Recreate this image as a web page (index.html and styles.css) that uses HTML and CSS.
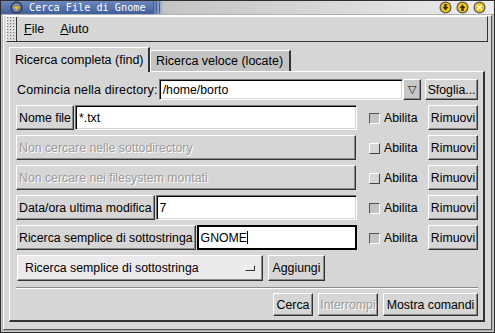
FILE: index.html
```html
<!DOCTYPE html>
<html>
<head>
<meta charset="utf-8">
<link rel="stylesheet" href="styles.css">
</head>
<body>
<div class="win">
  <div class="titlebar">
    <div class="title-blue">
      <span class="app-icon"><svg width="13" height="13" viewBox="0 0 13 13"><circle cx="6.5" cy="6.5" r="6" fill="#2d3550"/><circle cx="6.5" cy="6.5" r="4.6" fill="#7a87a8"/><path d="M3.5 5.5 H9.5 L6.5 9 Z" fill="#f0c400"/></svg></span>
      <span class="title-text">Cerca File di Gnome</span>
    </div>
    <div class="waves"><span></span><span></span><span></span></div>
    <div class="title-rest">
      <span class="tb-btn"><svg width="13" height="13" viewBox="0 0 13 13"><circle cx="6.5" cy="6.5" r="6" fill="#5b5a4a"/><circle cx="6.5" cy="6.5" r="4.8" fill="#e8c020"/><path d="M5.3 3 H7.7 V6 H9.3 L6.5 9.6 L3.7 6 H5.3 Z" fill="#3a3000"/></svg></span>
      <span class="tb-btn"><svg width="13" height="13" viewBox="0 0 13 13"><circle cx="6.5" cy="6.5" r="6" fill="#5b5a4a"/><circle cx="6.5" cy="6.5" r="4.8" fill="#e8c020"/><path d="M5.3 10 H7.7 V7 H9.3 L6.5 3.4 L3.7 7 H5.3 Z" fill="#3a3000"/></svg></span>
      <span class="tb-btn"><svg width="13" height="13" viewBox="0 0 13 13"><circle cx="6.5" cy="6.5" r="6" fill="#5b5a4a"/><circle cx="6.5" cy="6.5" r="4.8" fill="#e8c020"/><path d="M4.3 4.3 L8.7 8.7 M8.7 4.3 L4.3 8.7" stroke="#fff6c0" stroke-width="1.8"/></svg></span>
    </div>
  </div>
  <div class="body">
    <div class="menubar">
      <div class="handle"></div>
      <div class="menus">
        <span class="menu"><u>F</u>ile</span>
        <span class="menu"><u>A</u>iuto</span>
      </div>
    </div>
    <div class="main">
      <div class="tabs">
        <div class="tab active">Ricerca completa (find)</div>
        <div class="tab">Ricerca veloce (locate)</div>
      </div>
      <div class="panel">
        <div class="row row1">
          <span class="plain-label">Comincia nella directory:</span>
          <div class="entry dir">/home/borto</div>
          <div class="btn drop">▽</div>
          <div class="btn sfoglia">Sfoglia...</div>
        </div>
        <div class="row">
          <div class="btn lab">Nome file</div>
          <div class="entry grow">*.txt</div>
          <label class="chk"><span class="box on"></span>Abilita</label>
          <div class="btn rim">Rimuovi</div>
        </div>
        <div class="row">
          <div class="btn lab disabled grow">Non cercare nelle sottodirectory</div>
          <label class="chk"><span class="box"></span>Abilita</label>
          <div class="btn rim">Rimuovi</div>
        </div>
        <div class="row">
          <div class="btn lab disabled grow">Non cercare nei filesystem montati</div>
          <label class="chk"><span class="box"></span>Abilita</label>
          <div class="btn rim">Rimuovi</div>
        </div>
        <div class="row">
          <div class="btn lab">Data/ora ultima modifica</div>
          <div class="entry grow">7</div>
          <label class="chk"><span class="box on"></span>Abilita</label>
          <div class="btn rim">Rimuovi</div>
        </div>
        <div class="row">
          <div class="btn lab">Ricerca semplice di sottostringa</div>
          <div class="entry grow focus">GNOME<span class="caret"></span></div>
          <label class="chk"><span class="box on"></span>Abilita</label>
          <div class="btn rim">Rimuovi</div>
        </div>
        <div class="row addrow">
          <div class="btn optmenu">Ricerca semplice di sottostringa<span class="ind"></span></div>
          <div class="btn aggiungi">Aggiungi</div>
        </div>
        <div class="sep"></div>
        <div class="actions">
          <div class="btn act cerca">Cerca</div>
          <div class="btn act stop disabled">Interrompi</div>
          <div class="btn act mostra">Mostra comandi</div>
        </div>
      </div>
    </div>
  </div>
</div>
</body>
</html>
```
FILE: styles.css
```css
* { box-sizing: border-box; }
html, body { margin: 0; padding: 0; }
body {
  width: 495px; height: 333px; overflow: hidden;
  background: #d6d6d6;
  font-family: "Liberation Sans", Arial, sans-serif;
  font-size: 12.3px;
  color: #000;
}
.win {
  width: 495px; height: 333px;
  border: 1px solid #2e2e2e;
  background: #c8c8c8;
  display: flex; flex-direction: column;
}
.titlebar {
  height: 17px;
  display: flex;
  background: #c8c8c8;
  border-bottom: 1px solid #8a8a8a;
}
.title-blue {
  width: 152px;
  background: linear-gradient(#6c88bd, #3f5f9c);
  display: flex; align-items: center;
  padding-left: 9px;
}
.app-icon { width: 13px; height: 13px; display: flex; }
.title-text {
  font-family: "DejaVu Sans Mono", monospace;
  font-size: 10.2px;
  color: #fff;
  margin-left: 6px;
  white-space: nowrap;
}
.waves {
  width: 10px; display: flex; gap: 1px;
  background: linear-gradient(90deg, #5a78b0, #b8c0cc);
}
.waves span {
  width: 2px; border-left: 1px solid #3c5a94; border-radius: 50%/8px;
}
.title-rest {
  flex: 1;
  background: linear-gradient(90deg, #c4c4c4, #ececec);
  display: flex; justify-content: flex-end; align-items: center;
  gap: 4px; padding-right: 8px;
}
.tb-btn { width: 13px; height: 13px; display: flex; }
.body {
  flex: 1;
  background: #d6d6d6;
  border: 1px solid #fff;
  border-right-color: #555; border-bottom-color: #555;
  margin: 0 2px 2px 2px;
  display: flex; flex-direction: column;
  box-shadow: 0 0 0 1px #b0b0b0;
}
.menubar {
  height: 26px;
  margin: 0 3px 0 2px;
  display: flex;
  border: 1px solid #fff;
  border-right-color: #333; border-bottom-color: #333;
}
.handle {
  width: 10px;
  border-right: 1px solid #333;
  background-image: radial-gradient(circle, #fff 0.6px, transparent 0.9px), radial-gradient(circle, #777 0.6px, transparent 0.9px);
  background-size: 3px 3px, 3px 3px;
  background-position: 1px 1px, 2px 2px;
}
.menus { display: flex; align-items: center; padding-left: 7px; font-size: 12.5px; }
.menu { margin-right: 16px; }
.main {
  flex: 1;
  padding: 5px 6px 7px 5px;
  display: flex; flex-direction: column;
}
.tabs { display: flex; height: 24px; align-items: flex-end; }
.tab {
  height: 21px;
  width: 141px;
  padding: 0 0 0 5px;
  background: #c3c3c3;
  border: 1px solid #fff;
  border-bottom: none;
  border-right: 2px solid #333;
  display: flex; align-items: center;
  font-size: 12.5px;
  white-space: nowrap;
  overflow: hidden;
}
.tab.active {
  height: 25px;
  background: #d6d6d6;
  margin-bottom: -1px;
  position: relative; z-index: 1;
}
.panel {
  flex: 1;
  border: 1px solid #fff;
  border-right: 2px solid #333; border-bottom: 2px solid #333;
  padding: 7px 5px 4px 6px;
  display: flex; flex-direction: column;
}
.row {
  height: 25px;
  display: flex; align-items: center;
  margin-bottom: 5px;
}
.row1 { height: 21px; margin-bottom: 5px; }
.plain-label { width: 143px; padding-left: 1px; white-space: nowrap; font-size: 12.5px; letter-spacing: 0.15px; }
.btn {
  height: 100%;
  display: flex; align-items: center; justify-content: center;
  background: #d6d6d6;
  border: 1px solid #fff;
  border-right-color: #333; border-bottom-color: #333;
  box-shadow: inset -1px -1px 0 #8a8a8a;
  white-space: nowrap;
}
.btn.disabled { color: #9c9c9c; text-shadow: 1px 1px 0 #fff; }
.btn.lab { justify-content: flex-start; padding: 0 2px 0 2px; margin-right: 1px; }
.entry {
  height: 100%;
  background: #fff;
  border: 1px solid #777;
  border-right-color: #fff; border-bottom-color: #fff;
  box-shadow: inset 1px 1px 0 #000, inset -1px -1px 0 #d6d6d6;
  display: flex; align-items: center;
  padding-left: 3px;
  white-space: nowrap;
}
.entry.focus { border-color: #000; box-shadow: inset 1px 1px 0 #000, inset -1px -1px 0 #000; }
.caret { display: inline-block; width: 1px; height: 13px; background: #000; }
.dir { width: 245px; }
.grow { flex: 1; }
.drop { width: 18px; font-size: 11px; background: #c8c8c8; }
.sfoglia { width: 53px; margin-left: 4px; }
.chk {
  width: 71px;
  display: flex; align-items: center;
  padding-left: 12px;
}
.box {
  width: 11px; height: 11px; margin-right: 4px;
  border: 1px solid #fff;
  border-right-color: #444; border-bottom-color: #444;
  background: #d6d6d6;
  margin-top: 1px;
}
.box.on {
  border-color: #555 #fff #fff #555;
  background: #c3c3c3;
}
.rim { width: 50px; }
.addrow { height: 26px; margin-bottom: 6px; padding-left: 1px; }
.optmenu {
  width: 246px;
  justify-content: space-between;
  padding: 0 7px 0 7px;
  background: #ece9ec;
}
.ind {
  width: 10px; height: 6px;
  border: 1px solid #fff; border-right-color: #333; border-bottom-color: #333;
}
.aggiungi { width: 57px; margin-left: 5px; }
.sep { height: 2px; border-top: 1px solid #8a8a8a; border-bottom: 1px solid #fff; margin: 0 0 4px 0; }
.actions { display: flex; justify-content: flex-end; height: 23px; gap: 5px; }
.cerca { width: 40px; }
.stop { width: 60px; }
.mostra { width: 95px; }
```
